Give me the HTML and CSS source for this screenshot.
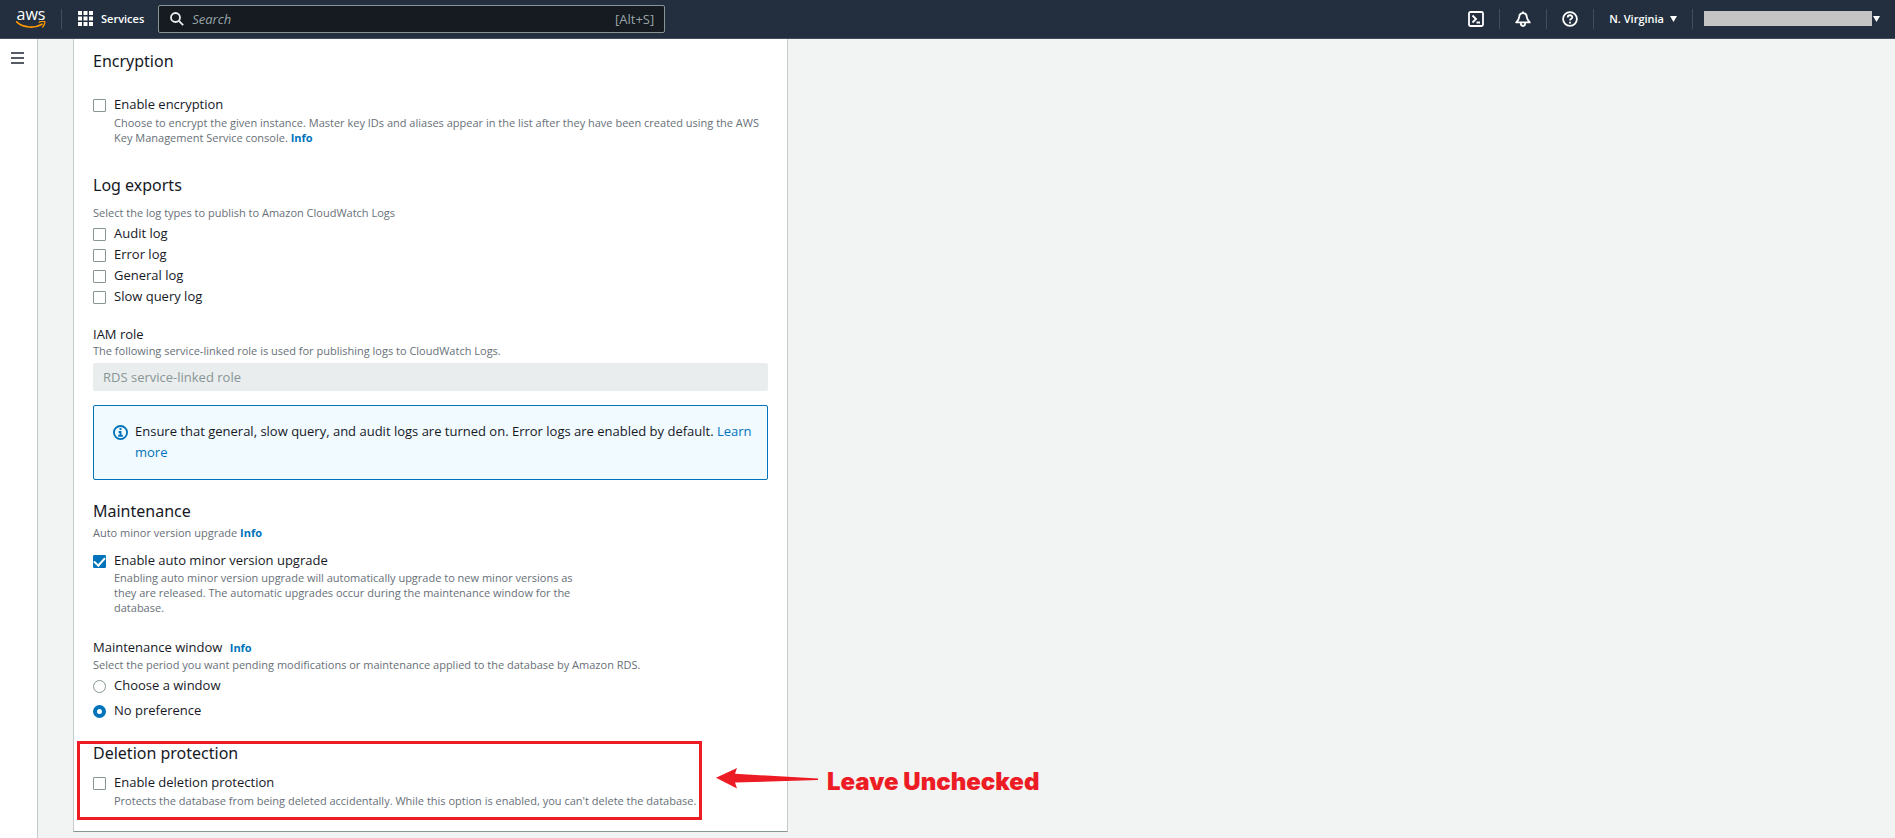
FILE: index.html
```html
<!DOCTYPE html>
<html lang="en">
<head>
<meta charset="utf-8">
<title>RDS - Create database</title>
<link rel="stylesheet" href="styles.css">
</head>
<body>
<header class="topbar">
  <a class="logo" href="#" aria-label="AWS home">
    <span class="logo-text">aws</span>
    <svg class="logo-smile" width="30" height="8" viewBox="0 0 30 8" aria-hidden="true">
      <path d="M.6 .9 C7.5 7 18.500 7.600 26 3.200" fill="none" stroke="#f90" stroke-width="1.700" stroke-linecap="round"/>
      <path d="M23.200 1.200 C25 .2 28 0 28.700 .7 C29.200 1.700 28 4.700 26.700 6" fill="none" stroke="#f90" stroke-width="1.300" stroke-linecap="round"/>
    </svg>
  </a>
  <span class="divider"></span>
  <button class="services" type="button">
    <svg width="15" height="15" viewBox="0 0 15 15" fill="#fff" aria-hidden="true">
      <path d="M0 0h4v4H0zM5.500 0h4v4h-4zM11 0h4v4h-4zM0 5.500h4v4H0zM5.500 5.500h4v4h-4zM11 5.500h4v4h-4zM0 11h4v4H0zM5.500 11h4v4h-4zM11 11h4v4h-4z"/>
    </svg>
    Services
  </button>
  <label class="search">
    <svg width="14" height="14" viewBox="0 0 14 14" fill="none" stroke="#eaeded" stroke-width="1.800" aria-hidden="true">
      <circle cx="5.500" cy="5.500" r="4.500"/><path d="M8.800 8.800 13.200 13.200"/>
    </svg>
    <input type="text" placeholder="Search" aria-label="Search">
    <span class="shortcut">[Alt+S]</span>
  </label>
  <nav class="tools">
    <button class="tool" type="button" aria-label="CloudShell">
      <svg width="16" height="16" viewBox="0 0 16 16" fill="none" stroke="#fff" stroke-width="1.800" aria-hidden="true">
        <rect x="1" y="1" width="14" height="14" rx="1.500"/><path d="M4.500 4.500 8 8l-3.500 3.500M8.500 11.500H12"/>
      </svg>
    </button>
    <span class="divider"></span>
    <button class="tool" type="button" aria-label="Notifications">
      <svg width="16" height="16" viewBox="0 0 16 16" fill="none" stroke="#fff" stroke-width="1.800" stroke-linejoin="round" aria-hidden="true">
        <path d="M8 .5v2M8 2.200C5.500 2.200 4.300 4 4.200 6 4 8.600 3 9.500 1.200 11.400h13.600C13 9.500 12 8.600 11.800 6 11.700 4 10.500 2.200 8 2.200ZM5.700 12c.2 4 4.400 4 4.600 0"/>
      </svg>
    </button>
    <span class="divider"></span>
    <button class="tool" type="button" aria-label="Help">
      <svg width="16" height="16" viewBox="0 0 16 16" fill="none" stroke="#fff" stroke-width="1.800" aria-hidden="true">
        <circle cx="8" cy="8" r="6.900"/><path d="M5.700 6.500C5.700 3.500 10.300 3.600 10.300 6.200 10.300 7.800 8 7.800 8 9.600M8 10.700v1.700"/>
      </svg>
    </button>
    <span class="divider"></span>
    <button class="region" type="button">N. Virginia
      <svg width="7" height="6" viewBox="0 0 7 6" fill="#fff" aria-hidden="true"><path d="M0 0h7L3.500 6z"/></svg>
    </button>
    <span class="divider"></span>
    <button class="account" type="button" aria-label="Account">
      <span class="account-name"></span>
      <svg width="7" height="6" viewBox="0 0 7 6" fill="#fff" aria-hidden="true"><path d="M0 0h7L3.500 6z"/></svg>
    </button>
  </nav>
</header>

<div class="page">
  <aside class="rail">
    <button class="menu" type="button" aria-label="Open navigation">
      <svg width="13" height="12" viewBox="0 0 13 12" fill="#545b64" aria-hidden="true"><path d="M0 0h13v2H0zM0 5h13v2H0zM0 10h13v2H0z"/></svg>
    </button>
  </aside>
  <main class="content">
    <form class="panel">
      <section class="encryption">
        <h2>Encryption</h2>
        <label class="option"><input type="checkbox" aria-describedby="enc-help">Enable encryption</label>
        <p class="help indent" id="enc-help">Choose to encrypt the given instance. Master key IDs and aliases appear in the list after they have been created using the AWS Key Management Service console. <a class="info" href="#">Info</a></p>
      </section>

      <section class="logs">
        <h2>Log exports</h2>
        <p class="help">Select the log types to publish to Amazon CloudWatch Logs</p>
        <div class="log-list">
          <label class="option"><input type="checkbox">Audit log</label>
          <label class="option"><input type="checkbox">Error log</label>
          <label class="option"><input type="checkbox">General log</label>
          <label class="option"><input type="checkbox">Slow query log</label>
        </div>
        <label class="field-label" for="iam-role">IAM role</label>
        <p class="help">The following service-linked role is used for publishing logs to CloudWatch Logs.</p>
        <input class="role" id="iam-role" type="text" value="RDS service-linked role" disabled>
        <div class="alert">
          <svg width="15" height="15" viewBox="0 0 16 16" fill="none" stroke="#0073bb" stroke-width="2" aria-hidden="true">
            <circle cx="8" cy="8" r="7"/><path d="M8 3.300v2M6 7.500h2v4M5.500 11.500h5"/>
          </svg>
          <p>Ensure that general, slow query, and audit logs are turned on. Error logs are enabled by default. <a href="#">Learn more</a></p>
        </div>
      </section>

      <section class="maintenance">
        <h2>Maintenance</h2>
        <p class="help">Auto minor version upgrade <a class="info" href="#">Info</a></p>
        <label class="option"><input type="checkbox" checked aria-describedby="auto-help">Enable auto minor version upgrade</label>
        <p class="help indent narrow" id="auto-help">Enabling auto minor version upgrade will automatically upgrade to new minor versions as they are released. The automatic upgrades occur during the maintenance window for the database.</p>
        <div class="field-label window-label">Maintenance window <a class="info" href="#">Info</a></div>
        <p class="help">Select the period you want pending modifications or maintenance applied to the database by Amazon RDS.</p>
        <div class="radio-list">
          <label class="option"><input type="radio" name="window">Choose a window</label>
          <label class="option"><input type="radio" name="window" checked>No preference</label>
        </div>
      </section>

      <section class="deletion">
        <h2>Deletion protection</h2>
        <label class="option"><input type="checkbox" aria-describedby="del-help">Enable deletion protection</label>
        <p class="help indent" id="del-help">Protects the database from being deleted accidentally. While this option is enabled, you can't delete the database.</p>
        <div class="highlight"></div>
        <div class="callout">
          <svg width="102" height="21" viewBox="0 0 102 21" fill="#ed1c24" aria-hidden="true"><path d="M0 9.700 21 0 19 5.700 102 10.500V12L19 14.500 21 20.500z"/></svg>
          <span>Leave Unchecked</span>
        </div>
      </section>
    </form>
  </main>
</div>
</body>
</html>
```

FILE: styles.css
```css
* { box-sizing: border-box; }

body {
  margin: 0;
  min-height: 100vh;
  display: flex;
  flex-direction: column;
  background: #f2f3f3;
  color: #16191f;
  font: 13px/20px "Open Sans", "Noto Sans", sans-serif;
}

h2, p { margin: 0; }
a { color: #0073bb; text-decoration: none; }
svg { display: block; flex: none; }

button {
  display: flex;
  align-items: center;
  padding: 0;
  border: 0;
  background: none;
  color: #fff;
  font: 600 11px/16px "Open Sans", "Noto Sans", sans-serif;
}

/* Top bar */
.topbar {
  display: flex;
  align-items: center;
  height: 39px;
  padding: 0 15px 1px 16px;
  background: #232f3e;
  border-bottom: 1px solid #414d5c;
}
.logo { width: 30px; color: #fff; }
.logo-text {
  display: block;
  font-size: 16px;
  line-height: 12px;
  text-align: center;
}
.logo-smile { margin-top: 1px; }
.divider { width: 1px; height: 20px; background: #414d5c; }
.logo + .divider { margin: 0 16px 0 15px; }
.services { gap: 8px; }
.search {
  display: flex;
  align-items: center;
  gap: 8px;
  width: 507px;
  height: 28px;
  margin-left: 14px;
  padding: 0 10px 0 11px;
  background: #161a21;
  border: 1px solid #879596;
  border-radius: 2px;
  color: #95a5a6;
}
.search input {
  flex: 1;
  min-width: 0;
  padding: 0;
  border: 0;
  outline: 0;
  background: none;
  color: #fff;
  font: 13px/20px "Open Sans", "Noto Sans", sans-serif;
}
.search input::placeholder { color: #95a5a6; font-style: italic; opacity: 1; }
.tools { display: flex; align-items: center; margin-left: auto; }
.tool { padding: 0 15px; }
.region { gap: 6px; padding: 0 15px; }
.account { gap: 1px; padding-left: 11px; }
.account-name { width: 168px; height: 15px; background: #c4c4c4; }

/* Page */
.page { display: flex; flex: 1; }
.rail {
  width: 38px;
  padding: 13px 0 0 11px;
  background: #fff;
  border-right: 1px solid #c5cacb;
}
.content { flex: 1; padding: 0 35px 5px; }
.panel {
  max-width: 715px;
  padding: 11px 19px 23px;
  background: #fff;
  border: 1px solid #c5cacb;
  border-top: 0;
  border-bottom-color: #879596;
}

h2 { font: 400 16px/22px "Noto Sans", "Open Sans", sans-serif; }
.help { color: #687078; font-size: 11px; line-height: 15px; }
.indent { padding-left: 21px; }
.narrow { max-width: 486px; }
.info { font-size: 11px; font-weight: 700; }
.field-label { display: block; line-height: 18px; }

.option { display: flex; gap: 8px; width: fit-content; }
.option input {
  appearance: none;
  flex: none;
  width: 13px;
  height: 13px;
  margin: 5px 0 0;
  background: #fff;
  border: 1px solid #879596;
  border-radius: 1px;
}
.option input[type="radio"] { border-radius: 50%; }
.option input[type="radio"]:checked { border: 4px solid #0073bb; }
.option input[type="checkbox"]:checked {
  display: grid;
  place-items: center;
  background: #0073bb;
  border-color: #0073bb;
}
.option input[type="checkbox"]:checked::before {
  content: "";
  width: 9px;
  height: 5px;
  margin-bottom: 3px;
  border: solid #fff;
  border-width: 0 0 2px 2px;
  rotate: -48deg;
}

.encryption h2 { margin-bottom: 22px; }
.encryption .help, .deletion .help { margin-top: 1px; }

.logs { margin-top: 29px; }
.logs h2 { margin-bottom: 9px; }
.log-list { display: grid; gap: 1px; margin: 3px 0 19px; }
.role {
  display: block;
  width: 100%;
  height: 28px;
  margin: 5px 0 14px;
  padding: 0 10px;
  background: #eaeded;
  border: 0;
  border-radius: 2px;
  color: #879596;
  font: 13px/20px "Open Sans", "Noto Sans", sans-serif;
}
.alert {
  display: flex;
  gap: 7px;
  padding: 15px 10px 16px 19px;
  background: #f1faff;
  border: 1px solid #0073bb;
  border-radius: 2px;
  line-height: 21px;
}
.alert svg { margin-top: 4px; }

.maintenance { margin-top: 20px; }
.maintenance h2 { margin-bottom: 3px; }
.maintenance .help + .option { margin-top: 10px; }
.window-label { margin-top: 23px; }
.window-label .info { margin-left: 4px; }
.radio-list { display: grid; gap: 5px; margin-top: 3px; }

.deletion { position: relative; margin-top: 22px; }
.deletion h2 { margin-bottom: 8px; }

/* Annotation drawn over the form */
.highlight {
  position: absolute;
  top: -1px;
  left: -16px;
  width: 625px;
  height: 79px;
  border: 3px solid #ed1c24;
  pointer-events: none;
}
.callout {
  position: absolute;
  top: 26px;
  left: 623px;
  display: flex;
  align-items: flex-start;
  gap: 9px;
  color: #ed1c24;
  font: 900 24px/28px Inter, sans-serif;
  white-space: nowrap;
}
```
